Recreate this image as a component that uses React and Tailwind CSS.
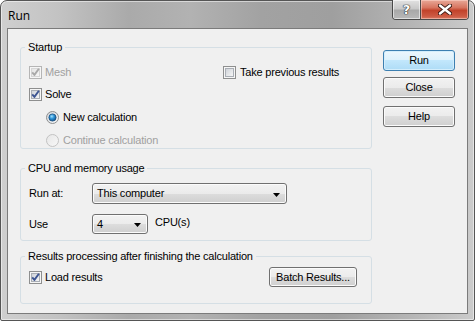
import React from "react";

function CheckBox({ checked, disabled, id }) {
  const outer = disabled ? "#b5b5b5" : "#8e8f8f";
  const inner = disabled ? "#d6d6d6" : "#a9aeb5";
  return (
    <svg width="13" height="13" viewBox="0 0 13 13" className="shrink-0">
      <defs>
        <linearGradient id={id} x1="0" y1="0" x2="1" y2="1">
          <stop offset="0" stopColor={disabled ? "#e4e4e4" : "#cdd1d7"} />
          <stop offset="1" stopColor={disabled ? "#f7f7f7" : "#f8f8f8"} />
        </linearGradient>
      </defs>
      <rect x="0.5" y="0.5" width="12" height="12" fill="#f6f6f6" stroke={outer} />
      <rect x="2.5" y="2.5" width="8" height="8" fill={`url(#${id})`} stroke={inner} />
      {checked && (
        <path
          d="M3.2 6.3 L5.4 8.9 L9.9 2.8"
          fill="none"
          stroke={disabled ? "#a9a9a9" : "#3d5592"}
          strokeWidth="1.9"
          strokeLinejoin="round"
        />
      )}
    </svg>
  );
}

function Radio({ selected, disabled, id }) {
  return (
    <svg width="13" height="13" viewBox="0 0 13 13" className="shrink-0">
      <defs>
        <linearGradient id={id + "o"} x1="0" y1="0" x2="1" y2="1">
          <stop offset="0" stopColor={disabled ? "#e6e6e6" : "#cfd3d9"} />
          <stop offset="1" stopColor={disabled ? "#f8f8f8" : "#fbfbfb"} />
        </linearGradient>
        <radialGradient id={id + "i"} cx="0.4" cy="0.35" r="0.7">
          <stop offset="0" stopColor="#a6e0fb" />
          <stop offset="0.45" stopColor="#2c94d8" />
          <stop offset="1" stopColor="#0f4c86" />
        </radialGradient>
      </defs>
      <circle cx="6.5" cy="6.5" r="6" fill={`url(#${id}o)`} stroke={disabled ? "#c2c2c2" : "#8e8f8f"} />
      {selected && <circle cx="6.5" cy="6.5" r="3.6" fill={`url(#${id}i)`} stroke="#1c4f7d" strokeWidth="0.8" />}
    </svg>
  );
}

function Arrow() {
  return (
    <svg width="7" height="4" viewBox="0 0 7 4" className="shrink-0">
      <polygon points="0,0 7,0 3.5,4" fill="#000" />
    </svg>
  );
}

function Button({ children, primary, className }) {
  return (
    <div
      className={
        "flex items-center justify-center rounded-[3px] border " +
        (primary
          ? "border-[#3c7fb1] bg-[linear-gradient(to_bottom,#ecf7fd_0%,#dcf1fc_50%,#c2e7fc_50%,#aedcf6_100%)] shadow-[inset_0_0_0_1px_#d4eefc] "
          : "border-[#707070] bg-[linear-gradient(to_bottom,#f2f2f2_0%,#ebebeb_50%,#dddddd_50%,#cfcfcf_100%)] shadow-[inset_0_0_0_1px_#fbfbfb] ") +
        (className || "")
      }
    >
      {children}
    </div>
  );
}

function Dropdown({ value, className }) {
  return (
    <div
      className={
        "flex items-center justify-between rounded-[3px] border border-[#707070] bg-[linear-gradient(to_bottom,#f2f2f2_0%,#ebebeb_50%,#dddddd_50%,#cfcfcf_100%)] shadow-[inset_0_0_0_1px_#fbfbfb] pl-[4px] pr-[6px] " +
        (className || "")
      }
    >
      <span>{value}</span>
      <span className="mt-[2px]">
        <Arrow />
      </span>
    </div>
  );
}

export default function App() {
  return (
    <div className="w-[475px] h-[321px] font-['Liberation_Sans',Arial,sans-serif] text-[11px] leading-[13px] tracking-[-0.2px] text-black">
      <div className="w-full h-full flex flex-col rounded-t-[7px] rounded-b-[2px] border border-[#555555] bg-[linear-gradient(to_right,#cfcfcf_0%,#c3c3c3_12%,#aaaaaa_27%,#b2b2b2_40%,#a2a2a2_55%,#9f9f9f_70%,#b4b4b4_86%,#cbcbcb_100%)] shadow-[inset_0_0_0_1px_rgba(255,255,255,0.5)]">
        <div className="h-[27px] flex items-start justify-between shrink-0">
          <span className="pl-[7px] pt-[8px] text-[12px] tracking-normal font-['Open_Sans','Liberation_Sans',sans-serif] leading-[14px]">
            Run
          </span>
          <div className="-mt-[1px] mr-[5px] flex h-[20px] rounded-b-[4px] border border-t-0 border-[#4a4a4a] overflow-hidden">
            <div className="w-[28px] h-full flex items-center justify-center border-r border-[#4a4a4a] bg-[linear-gradient(to_bottom,#e2e2e2_0%,#c9c9c9_45%,#a9a9a9_55%,#b9b9b9_100%)] shadow-[inset_0_0_0_1px_rgba(255,255,255,0.55)]">
              <span className="text-[13px] font-bold text-white leading-[13px] tracking-normal font-['DejaVu_Sans',sans-serif] [text-shadow:0_0_1px_#222,0_0_1px_#222,0_0_1px_#222]">
                ?
              </span>
            </div>
            <div className="w-[47px] h-full flex items-center justify-center bg-[linear-gradient(to_bottom,#e8a898_0%,#d77560_40%,#c2432b_55%,#cd5a43_85%,#d97a63_100%)] shadow-[inset_0_0_0_1px_rgba(255,220,210,0.5)]">
              <svg width="14" height="11" viewBox="0 0 14 11">
                <path d="M2 1.5 L12 9.5 M12 1.5 L2 9.5" stroke="#3a1a14" strokeWidth="4.2" strokeLinecap="round" />
                <path d="M2 1.5 L12 9.5 M12 1.5 L2 9.5" stroke="#ffffff" strokeWidth="2.4" strokeLinecap="round" />
              </svg>
            </div>
          </div>
        </div>

        <div className="ml-[6px] w-[461px] h-[286px] border border-[#7b7b7b] bg-[#f0f0f0] flex">
          <div className="pl-[12px] pt-[12px] flex flex-col">
            <fieldset className="w-[352px] rounded-[3px] border border-[#d5dfe5] px-[4px] pt-[12px] pb-[1px]">
              <legend className="px-[3px] leading-[13px]">Startup</legend>
              <div className="h-[13px] flex items-center pl-[4px]">
                <div className="w-[194px] flex items-center gap-[3px]">
                  <CheckBox checked disabled id="cbMesh" />
                  <span className="text-[#a0a0a0]">Mesh</span>
                </div>
                <div className="flex items-center gap-[4px]">
                  <CheckBox id="cbPrev" />
                  <span>Take previous results</span>
                </div>
              </div>
              <div className="h-[13px] mt-[9px] flex items-center gap-[3px] pl-[4px]">
                <CheckBox checked id="cbSolve" />
                <span>Solve</span>
              </div>
              <div className="h-[13px] mt-[10px] flex items-center gap-[4px] pl-[21px]">
                <Radio selected id="rNew" />
                <span>New calculation</span>
              </div>
              <div className="h-[13px] mt-[10px] flex items-center gap-[4px] pl-[21px]">
                <Radio disabled id="rCont" />
                <span className="text-[#a0a0a0]">Continue calculation</span>
              </div>
            </fieldset>

            <fieldset className="mt-[13px] w-[352px] rounded-[3px] border border-[#d5dfe5] px-[4px] pt-[8px] pb-[6px]">
              <legend className="px-[3px] leading-[13px]">CPU and memory usage</legend>
              <div className="h-[21px] flex items-center pl-[4px]">
                <span className="w-[63px]">Run at:</span>
                <Dropdown value="This computer" className="w-[195px] h-[21px]" />
              </div>
              <div className="h-[20px] mt-[10px] flex items-center pl-[4px]">
                <span className="w-[63px]">Use</span>
                <Dropdown value="4" className="w-[56px] h-[20px]" />
                <span className="ml-[7px] mb-[3px]">CPU(s)</span>
              </div>
            </fieldset>

            <fieldset className="mt-[9px] w-[352px] rounded-[3px] border border-[#d5dfe5] px-[4px] pt-[4px] pb-[16px]">
              <legend className="px-[3px] leading-[13px]">Results processing after finishing the calculation</legend>
              <div className="h-[20px] flex items-center pl-[4px]">
                <div className="w-[240px] flex items-center gap-[3px]">
                  <CheckBox checked id="cbLoad" />
                  <span>Load results</span>
                </div>
                <Button className="w-[88px] h-[20px]">Batch Results...</Button>
              </div>
            </fieldset>
          </div>

          <div className="ml-[11px] pt-[21px] flex flex-col">
            <Button primary className="w-[72px] h-[21px]">Run</Button>
            <Button className="w-[72px] h-[21px] mt-[6px]">Close</Button>
            <Button className="w-[72px] h-[21px] mt-[8px]">Help</Button>
          </div>
        </div>
      </div>
    </div>
  );
}
